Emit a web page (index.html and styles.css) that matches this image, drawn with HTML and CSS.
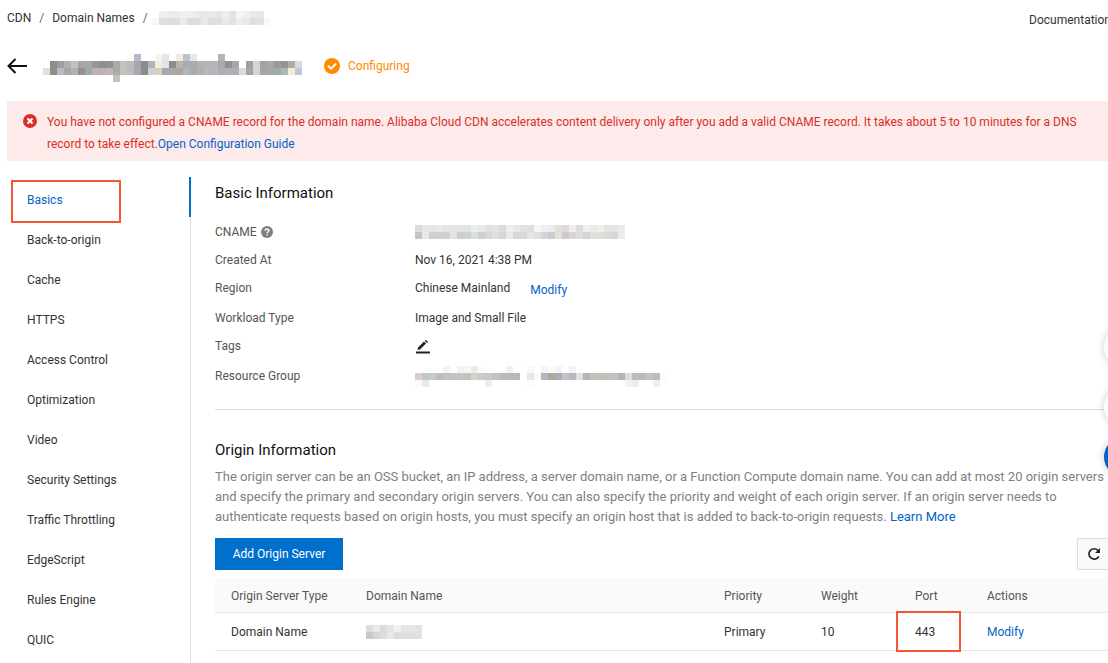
FILE: index.html
```html
<!DOCTYPE html>
<html lang="en">
<head>
<meta charset="utf-8">
<title>CDN - Domain Names</title>
<link rel="stylesheet" href="styles.css">
</head>
<body>
<header class="topbar">
  <nav class="crumbs" aria-label="Breadcrumb">
    <a href="#">CDN</a><span class="sep">/</span><a href="#">Domain Names</a><span class="sep last">/</span>
    <svg class="mosaic" data-rows="-,eeeeee,ededed,ebebec,efefee,f0efef,ebebea,e8e8e7,ebe9e9,e6e4e4,eeeeee,e2e4e4,f5f7f6,eff0f0,ebebeb,e6e6e5,-|f7f7f7,dededd,dfdede,dddde3,e9eaec,dbdbd9,dededd,e9e9e8,dfdedc,dededd,e6e8ea,e0e3e2,eeeeea,e9e9e9,dedddf,e2e2e2,f6faff"></svg>
  </nav>
  <a class="docs" href="#">Documentation</a>
</header>
<div class="title">
  <button class="back" aria-label="Back"><svg width="20" height="16" viewBox="0 0 20 16"><path d="M8.5 1 1.5 8l7 7M1.5 8H20" fill="none" stroke="#111" stroke-width="2"/></svg></button>
  <svg class="mosaic name" data-rows="-,-,-,-,-,-,-,-,-,-,-,-,fffbf0,bcb5cc,-,-,f8f3f0,e0e8ef,-,f5ebda,bcc2c9,e4eaf0,-,-,-,b0b5b5|-,8f8d88,9a9fa3,b5b0b0,bcc2c8,aaa59c,a0a9ae,9c9594,938f90,939090,a9aca4,c2c2c0,bcbcbc,a8a3ae,8a8d8f,adb5b8,f6ecd8,dce4ec,8f8d88,b8b3ad,a8adb2,a9abb0,b3b3b5,b9b5b7,b3b6ba,a6acad,94918c,a8a6ad,-,a49f9d,d5d5d0,a0a3a5,a5a8aa,999b9a,939491,b0aba5,d3dce6|dfe0df,8f8d88,b8bcc2,a5a8ab,b2b2b4,938f93,a0a8ab,c2b1b8,bdb0b6,c4b5ba,a9aca4,c2c2c0,bcbcbc,ada5b0,8a8d8f,cdd1d4,d8d0bd,a4a8a8,a8aaa9,ada5a2,b3b3b7,a9adb0,b0b1b5,bab6ba,b3b6ba,aab0b0,b1b1b4,aeadb8,dcdadd,a8a4a2,d5d5d0,a3a5a6,a5a8aa,a0a9a9,adb8b5,f3ead8,b8cad2|-,-,-,-,-,-,-,-,-,-,c2c2bc"></svg>
  <span class="status"><svg width="16" height="16" viewBox="0 0 16 16"><circle cx="8" cy="8" r="8" fill="#ff8a00"/><path d="m4 7.7 3 3 5.200-5.200" fill="none" stroke="#fff" stroke-width="2"/></svg>Configuring</span>
</div>
<div class="alert" role="alert">
  <svg class="alert-icon" width="14" height="14" viewBox="0 0 14 14"><circle cx="7" cy="7" r="7" fill="#d93026"/><path d="m4.500 4.500 5 5m0-5-5 5" stroke="#fff" stroke-width="2"/></svg>
  <p>You have not configured a CNAME record for the domain name. Alibaba Cloud CDN accelerates content delivery only after you add a valid CNAME record. It takes about 5 to 10 minutes for a DNS record to take effect.<a href="#">Open Configuration Guide</a></p>
</div>
<div class="layout">
  <nav class="side" aria-label="Domain settings">
    <a class="on" href="#">Basics</a>
    <a href="#">Back-to-origin</a>
    <a href="#">Cache</a>
    <a href="#">HTTPS</a>
    <a href="#">Access Control</a>
    <a href="#">Optimization</a>
    <a href="#">Video</a>
    <a href="#">Security Settings</a>
    <a href="#">Traffic Throttling</a>
    <a href="#">EdgeScript</a>
    <a href="#">Rules Engine</a>
    <a href="#">QUIC</a>
  </nav>
  <main>
    <section class="basic">
      <h2>Basic Information</h2>
      <dl>
        <div><dt>CNAME <svg width="12" height="12" viewBox="0 0 12 12"><circle cx="6" cy="6" r="6" fill="#808080"/><path d="M4.200 4.700C4.200 2.300 7.900 2.400 7.900 4.600 7.900 5.800 6.100 5.800 6.100 7.300M6.100 8.200V9.600" fill="none" stroke="#fff" stroke-width="1.400"/></svg></dt><dd><svg class="mosaic" data-rows="e0d8dd,e8e7ea,e6e6e3,e9e9e9,e3e4e4,e2e3e3,e4e4e4,e2e3e3,e9eeef,e9e9e9,dfe1e0,e4e5e4,d9dcde,efeff1,e7e6e9,e1e1e3,dcdfde,f4f7f5,eeeeee,ececec,e1e1d7,dcd7e2,efeff0,d8dddd,efefef,e8e9e8,efefed,e5e5e5,e3e3e3,ebebeb|c7c1c8,eae8ed,cfcfce,cecfce,ced2d4,e2e4e3,cfcecd,d0cfcf,d7dfdf,cdcdcc,d7d7d6,e0dfe0,d6d4d9,e9e8eb,dbd5dc,dbd6db,e5e6df,dfe1df,d4d5d4,c9ccd0,e1e1d7,cec9cf,d8d3d9,dcdedd,d2d6cf,dfe1dd,dfe0d7,dbdad9,dad5d9,e8efef"></svg></dd></div>
        <div><dt>Created At</dt><dd>Nov 16, 2021 4:38 PM</dd></div>
        <div class="tall"><dt>Region</dt><dd>Chinese Mainland<a class="modify" href="#">Modify</a></dd></div>
        <div><dt>Workload Type</dt><dd>Image and Small File</dd></div>
        <div class="tall"><dt>Tags</dt><dd><button class="edit" aria-label="Edit tags"><svg width="16" height="14" viewBox="0 0 16 14"><path d="M1 12.500h14" stroke="#222" stroke-width="2"/><path d="M2.500 10 3 7.500l6-6 2 2-6 6zM9.800.800 11 0l2 1.800-1.200 1.200z" fill="#222"/></svg></button></dd></div>
        <div><dt>Resource Group</dt><dd><svg class="mosaic" data-rows="-,-,-,-,f3f2f4,-,f2f2f2,f6f7f3,ebebea,f9fcfc,-,-,-,f4f1f3,-,-,f6faf8,-,f6f4f8,fefaf6,f3f3f8,-,f2f2f3|d9cdd0,c4c6ca,c9c9c9,bcbdbc,c1c3c3,c3c4c4,c3c4c4,c2c4b8,d1d3ce,c9cdc8,cac9c7,c3c2c8,bbbcc1,beb8bc,bdb7b8,-,e7e7e7,fdf7ee,b8b6b9,aba99e,abacb5,bfc4cc,b8b8bd,e0dfe4,b1b5b7,c5c0bd,bebfb6,c2c1b8,bdc4cc,b1b5b9,dfddd8,b9bfbf,bfb8b8,b9c5c6,c0bab9,f7fcff|fdfaf6,e8e8ea,-,-,-,-,-,-,-,-,efefef,-,-,-,-,-,fcfcfa,-,-,-,-,-,-,-,-,-,-,-,-,-,f5f2ec,eeeeec,-,-,f1efef"></svg></dd></div>
      </dl>
    </section>
    <section class="origin">
      <h2>Origin Information</h2>
      <p class="desc">The origin server can be an OSS bucket, an IP address, a server domain name, or a Function Compute domain name. You can add at most 20 origin servers and specify the primary and secondary origin servers. You can also specify the priority and weight of each origin server. If an origin server needs to authenticate requests based on origin hosts, you must specify an origin host that is added to back-to-origin requests. <a href="#">Learn More</a></p>
      <div class="actions">
        <button class="primary">Add Origin Server</button>
        <button class="refresh" aria-label="Refresh"><svg width="14" height="14" viewBox="0 0 14 14"><path d="M11.800 9.300A5.200 5.200 0 1 1 11.300 3.800" fill="none" stroke="#222" stroke-width="1.700"/><path d="M13 1v5H8z" fill="#222"/></svg></button>
      </div>
      <table>
        <thead><tr><th class="c-type">Origin Server Type</th><th>Domain Name</th><th class="c-priority">Priority</th><th class="c-weight">Weight</th><th class="c-port">Port</th><th class="c-actions">Actions</th></tr></thead>
        <tbody><tr><td>Domain Name</td><td><svg class="mosaic" data-rows="dcdde0,eaeaec,dcdbda,e5e5e3,f2f2f2,e5e5e6,e5e6e6,e2e3e5|c9c9ca,d2d7db,dbdcde,e6e9e8,deddda,dfdfde,dbe0e0,e0e1e2"></svg></td><td>Primary</td><td>10</td><td class="marked">443</td><td><a href="#">Modify</a></td></tr></tbody>
      </table>
    </section>
  </main>
</div>
<aside class="floaters"><span class="bubble"></span><span class="bubble"></span><span class="bubble blue"></span></aside>
<script src="mosaic.js"></script>
</body>
</html>
```
FILE: styles.css
```css
*, *::before, *::after { box-sizing: border-box; }
body { margin: 0; height: 100vh; overflow: hidden; background: #fff; color: #333; font: 12px/20px Roboto, "Open Sans", sans-serif; }
a { color: #0064c8; text-decoration: none; }
button { font: inherit; border: 0; padding: 0; background: none; cursor: pointer; }
svg { display: block; flex: none; }
h2 { margin: 0; font-size: 15px; line-height: 24px; font-weight: 400; color: #111; }

.topbar { display: flex; justify-content: space-between; height: 36px; padding-left: 7px; }
.crumbs { display: flex; align-items: center; }
.crumbs a, .docs { color: #333; }
.sep { margin: 0 8px; color: #666; }
.sep.last { margin-right: 4px; }
.docs { margin: 10px -3px 0 0; }

.title { display: flex; align-items: center; height: 60px; padding-left: 7px; }
.back { margin-right: 16px; }
.name { margin-top: 4px; }
.status { display: flex; align-items: center; gap: 8px; margin-left: 22px; color: #ff8a00; }

.alert { display: flex; gap: 10px; margin: 5px 0 0 7px; padding: 10px 16px 6px; background: #fdeaea; color: #d93026; line-height: 22px; }
.alert-icon { margin-top: 3px; }
.alert p { margin: 0; }

.layout { display: flex; margin: 16px 0 0 7px; }
.side { flex: none; width: 184px; height: calc(100vh - 177px); border-right: 1px solid #ddd; }
.side a { position: relative; display: block; height: 40px; padding: 6px 0 0 20px; line-height: 34px; color: #333; }
.side .on { color: #0064c8; }
.side .on::before { content: ""; position: absolute; top: 3px; left: 4px; width: 110px; height: 43px; border: 2px solid #f5552f; }
.side .on::after { content: ""; position: absolute; top: 0; right: -1px; width: 2px; height: 40px; background: #0070cc; }

main { flex: 1; min-width: 0; padding-left: 24px; }
.basic { padding: 4px 0 19px; border-bottom: 1px solid #ddd; }
dl { margin: 13px 0 0; }
dl div { display: flex; height: 28px; }
dl .tall { height: 30px; }
dt { display: flex; align-items: center; gap: 4px; width: 200px; height: 28px; color: #555; }
dd { display: flex; align-items: center; margin: 0; height: 28px; }
.modify { margin: 4px 0 0 20px; }
.edit { margin-top: 2px; }

.origin { padding-top: 28px; }
.desc { margin: 5px 0 0; font-size: 13px; color: #808080; }
.actions { display: flex; justify-content: space-between; margin: 11px 0 8px; }
.primary { width: 128px; height: 32px; background: #0070cc; color: #fff; }
.refresh { display: flex; align-items: center; justify-content: center; width: 34px; height: 32px; margin-right: -3px; border: 1px solid #ddd; background: #fafafa; }

table { width: 100%; table-layout: fixed; border-collapse: collapse; }
th, td { height: 34px; padding: 2px 0 0 16px; text-align: left; font-weight: 400; border-bottom: 1px solid #e5e5e5; }
th { background: #fafafa; color: #555; }
td { height: 38px; }
.c-type { width: 135px; }
.c-priority { width: 97px; }
.c-weight { width: 94px; }
.c-port { width: 72px; }
.c-actions { width: 137px; }
.marked { position: relative; }
.marked::after { content: ""; position: absolute; inset: -2px 10px -2px -3px; border: 2px solid #f5552f; }

.floaters { position: fixed; top: 327px; right: -36px; display: grid; gap: 20px; }
.bubble { width: 40px; height: 40px; border-radius: 50%; background: #fff; box-shadow: 0 0 8px rgba(0, 0, 0, .2); }
.bubble.blue { margin-top: -10px; background: #0064c8; }
```
FILE: mosaic.js
```js
// Draws the masked values: rows are split by "|", cells by ",", and "-" leaves a cell empty.
const CELL = 7;
document.querySelectorAll(".mosaic").forEach((svg) => {
  const rows = svg.dataset.rows.split("|").map((row) => row.split(","));
  svg.setAttribute("width", Math.max(...rows.map((row) => row.length)) * CELL);
  svg.setAttribute("height", rows.length * CELL);
  rows.forEach((row, y) => row.forEach((color, x) => {
    if (color === "-") return;
    const rect = document.createElementNS("http://www.w3.org/2000/svg", "rect");
    rect.setAttribute("x", x * CELL);
    rect.setAttribute("y", y * CELL);
    rect.setAttribute("width", CELL);
    rect.setAttribute("height", CELL);
    rect.setAttribute("fill", "#" + color);
    svg.append(rect);
  }));
});
```
